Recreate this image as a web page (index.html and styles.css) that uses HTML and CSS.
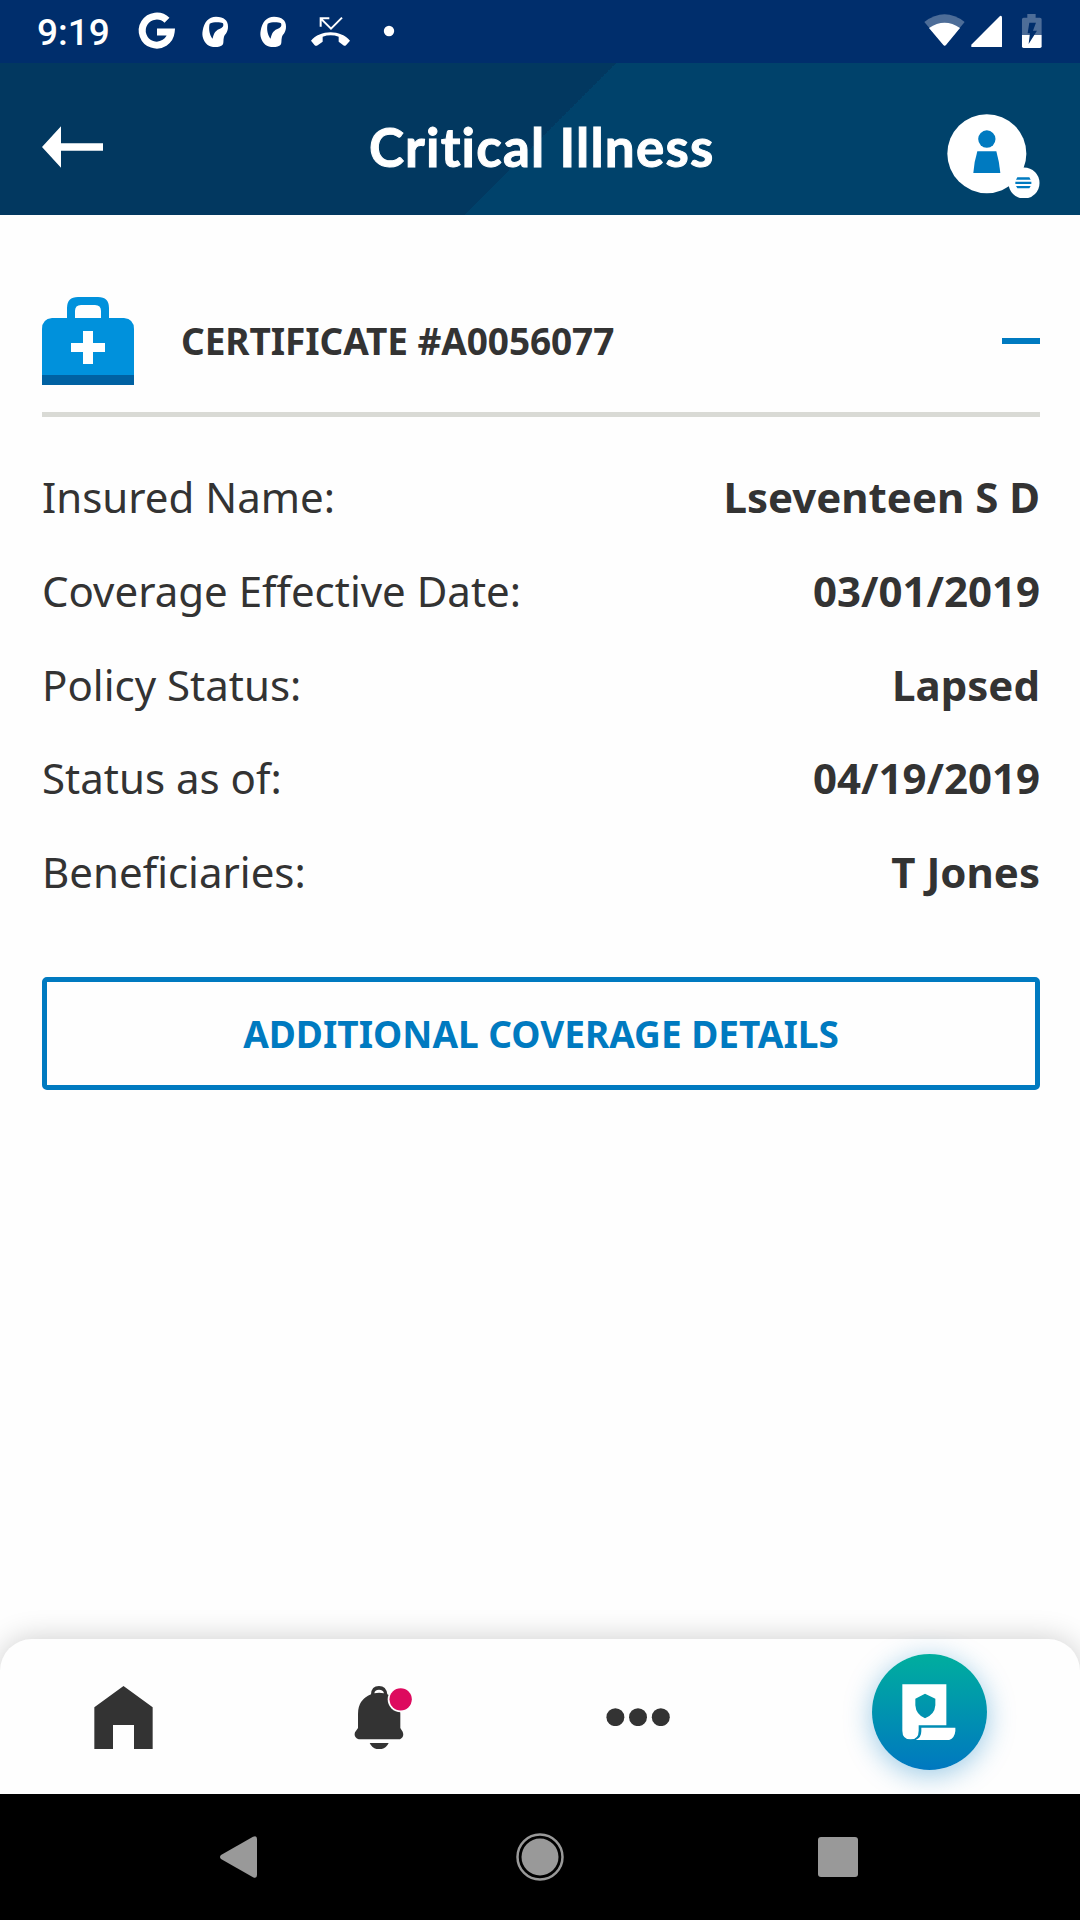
FILE: index.html
```html
<!DOCTYPE html>
<html lang="en">
<head>
<meta charset="utf-8">
<title>Critical Illness</title>
<link rel="stylesheet" href="styles.css">
</head>
<body>
<div class="screen">
  <div class="status-bar">
    <span class="clock">9:19</span>
    <svg class="notifications" viewBox="405 0 795 189" aria-hidden="true">
      <path d="M501 61A43.500 43.500 0 1 0 513.500 96H471" fill="none" stroke="#fff" stroke-width="21"/>
      <g id="head" fill="#fff" fill-rule="evenodd">
        <path d="M648 50C672 50 684 61 684 80C684 97 675 102 672 110C669 120 672 128 668 134C660 143 634 144 622 134C610 122 605 108 608 92C612 66 626 50 648 50ZM629 71C640 66 660 66 669 70C672 79 668 83 658 87C643 93 640 106 638 116C629 107 625 86 629 71Z"/>
      </g>
      <use href="#head" x="174"/>
      <path d="M962 80V55H988M962 55L993 86L1026 53" fill="none" stroke="#fff" stroke-width="6"/>
      <path d="M933 122C960 88 1023 88 1050 122L1038 136Q1034 139 1030 136L1016 125V110Q992 102 968 110V125L953 136Q948 139 944 136Z" fill="#fff"/>
      <circle cx="1167" cy="93" r="15.500" fill="#fff"/>
    </svg>
    <svg class="indicators" viewBox="120 0 370 189" aria-hidden="true">
      <path d="M133 66Q194 20 254 66L194 138Z" fill="#4d6d98"/>
      <path d="M147 84Q194 52 240 84L198 135Q194 139 190 135Z" fill="#fff"/>
      <path d="M360 48Q366 46 366 52V141H274V134Z" fill="#fff"/>
      <path d="M442 42H467V53H480Q485 53 485 58V105H426V58Q426 53 431 53H442Z" fill="#4d6d98"/>
      <path d="M426 105H485V139Q485 144 480 144H431Q426 144 426 139Z" fill="#fff"/>
      <path d="M448 68H468L459 92H471L446 132L450 100H443Z" fill="#002e6c"/>
    </svg>
  </div>

  <header class="app-header">
    <svg class="back" viewBox="126 378 183 125" aria-label="Back"><path d="M126 440.500L183 378V429H309V452H183V503Z" fill="#fff"/></svg>
    <h1 class="title">Critical Illness</h1>
    <svg class="profile" viewBox="203 341 278 254" aria-label="Profile">
      <circle cx="322.500" cy="460" r="118.500" fill="#fff"/>
      <circle cx="434" cy="548" r="46.500" fill="#fff"/>
      <g fill="#007ac0">
        <circle cx="322.500" cy="416" r="26"/>
        <path d="M294 453H351Q360 485 363 518H282Q284 485 294 453Z"/>
        <path d="M414 531H450L454 538H410ZM408 544H456V551H408ZM410 557H454L450 564H414Z"/>
      </g>
    </svg>
  </header>

  <main class="content">
    <section class="certificate">
      <div class="certificate-head">
        <svg class="bag" viewBox="0 0 92 88" aria-hidden="true">
          <path d="M10 21H25V11Q25 0 36 0H56Q67 0 67 11V21H82Q92 22 92 32V78H0V32Q0 22 10 21ZM33 21H59V14Q59 8 53 8H39Q33 8 33 14Z" fill="#0091dc" fill-rule="evenodd"/>
          <path d="M0 78H92V88H0Z" fill="#0061a2"/>
          <path d="M41 34H51V46H63V55H51V67H41V55H29V46H41Z" fill="#fff"/>
        </svg>
        <h2 class="certificate-title">CERTIFICATE #A0056077</h2>
        <span class="collapse"></span>
      </div>
      <dl class="details">
        <div class="row"><dt>Insured Name:</dt><dd>Lseventeen S D</dd></div>
        <div class="row"><dt>Coverage Effective Date:</dt><dd>03/01/2019</dd></div>
        <div class="row"><dt>Policy Status:</dt><dd>Lapsed</dd></div>
        <div class="row"><dt>Status as of:</dt><dd>04/19/2019</dd></div>
        <div class="row"><dt>Beneficiaries:</dt><dd>T Jones</dd></div>
      </dl>
      <button class="more">ADDITIONAL COVERAGE DETAILS</button>
    </section>
  </main>

  <nav class="tab-bar">
    <svg class="tab-home" viewBox="282 228 177 189" aria-label="Home"><path d="M370.500 228L458 292V417H402V345H339V417H283V292Z" fill="#333"/></svg>
    <svg class="tab-alerts" viewBox="1063 227 177 190" aria-label="Notifications">
      <g fill="#333">
        <path d="M1075 353V310Q1075 268 1114 252Q1115 227 1138 227Q1160 227 1163 252Q1202 268 1202 310V353L1209 364Q1215 380 1201 387H1077Q1061 381 1066 366Z"/>
        <path d="M1110 398H1167Q1158 417 1138 417Q1119 417 1110 398Z"/>
      </g>
      <path d="M1124 249Q1125 238 1138 238Q1151 238 1153 249Q1138 245 1124 249Z" fill="#fff"/>
      <circle cx="1203" cy="267" r="39" fill="#fefefe"/>
      <circle cx="1203" cy="267" r="33.500" fill="#dd0a5e"/>
    </svg>
    <svg class="tab-more" viewBox="138 294 192 55" aria-label="More"><g fill="#333"><circle cx="166" cy="321.500" r="27"/><circle cx="234" cy="321.500" r="27"/><circle cx="302.500" cy="321.500" r="27"/></g></svg>
    <span class="tab-policy">
      <svg class="policy" viewBox="1028 221 161 170" aria-label="Policies">
        <path d="M1029 222H1161V345H1078V361Q1078 387 1054 387Q1029 387 1029 361ZM1097 250L1068 265V285Q1070 313 1097 324Q1126 313 1128 285V265Z" fill="#fff" fill-rule="evenodd"/>
        <path d="M1086 352H1188V362Q1186 385 1166 390H1066Q1086 384 1086 362Z" fill="#fff"/>
      </svg>
    </span>
  </nav>

  <div class="system-nav">
    <svg class="nav-back" viewBox="0 0 37 42"><path d="M1 19L33 .8Q37-1 37 3V39Q37 43 33 41.200L1 23Q-1 21 1 19Z" fill="#999"/></svg>
    <svg class="nav-home" viewBox="0 0 48 48"><circle cx="24" cy="24" r="22.500" fill="none" stroke="#999" stroke-width="2.500"/><circle cx="24" cy="24" r="18.500" fill="#999"/></svg>
    <span class="nav-recent"></span>
  </div>
</div>
</body>
</html>
```
FILE: styles.css
```css
* { box-sizing: border-box; }
body { margin: 0; font-family: "Noto Sans", sans-serif; color: #333; background: #fefefe; }
svg { display: block; flex: none; }
.screen { width: 1080px; height: 1920px; display: flex; flex-direction: column; overflow: hidden; }

.status-bar { height: 63px; flex: none; display: flex; align-items: center; background: #002e6c; padding: 0 36.7px 0 37px; }
.clock { width: 98px; font: 500 37px/63px Roboto, sans-serif; color: #fff; padding-top: 2px; white-space: nowrap; }
.notifications { width: 265px; height: 63px; }
.indicators { width: 123.3px; height: 63px; margin-left: auto; }

.app-header { height: 152px; flex: none; display: flex; justify-content: space-between; align-items: flex-start; padding: 0 40px 0 42px; background: linear-gradient(135deg, #023860 50%, #00426b 50%); }
.back { width: 61px; height: 42px; margin-top: 63px; }
.title { margin: 0 0 0 33px; padding-top: 48px; font: 700 53px/72px Lato, sans-serif; letter-spacing: 1.2px; font-variant-ligatures: none; -webkit-text-stroke: 1px #fff; color: #fff; white-space: nowrap; }
.profile { width: 92.7px; height: 84.7px; margin-top: 50.5px; }

.content { flex: 1; padding: 82px 40px 0 42px; }
.certificate { display: flex; flex-direction: column; }
.certificate-head { display: flex; align-items: center; padding-bottom: 27px; border-bottom: 5px solid #d9dad5; }
.bag { width: 92px; height: 88px; }
.certificate-title { margin: 0 0 0 47px; font-size: 37px; line-height: 60px; font-weight: 700; letter-spacing: -.1px; white-space: nowrap; }
.collapse { width: 38px; height: 6px; margin-left: auto; background: #007ac0; }
.details { margin: 33px 0 58px; font-size: 42px; }
.row { display: flex; justify-content: space-between; height: 93.75px; line-height: 93.75px; }
.row dd { margin: 0; font-weight: 700; }
.more { height: 113px; border: 5px solid #007ac0; border-radius: 5px; background: #fefefe; padding: 0; color: #007ac0; font: 700 37px "Noto Sans", sans-serif; }

.tab-bar { height: 155px; flex: none; display: flex; align-items: flex-start; padding-left: 94px; background: #fefefe; border-radius: 32px 32px 0 0; box-shadow: 0 0 30px rgba(0, 0, 0, .2); }
.tab-home { width: 59px; height: 63px; margin-top: 47px; }
.tab-alerts { width: 59px; height: 63.3px; margin: 46.7px 0 0 201.3px; }
.tab-more { width: 64px; height: 18.3px; margin: 69px 0 0 193px; }
.tab-policy { width: 115px; height: 116px; margin: 15px 0 0 201.7px; display: flex; padding: 29.5px 0 0 30.5px; border-radius: 50%; background: linear-gradient(#00ae9e, #0078c0); box-shadow: 0 5px 28px rgba(0, 122, 192, .4); }
.policy { width: 53.7px; height: 56.7px; }

.system-nav { height: 126px; flex: none; display: flex; justify-content: space-between; align-items: center; padding: 0 222px 0 220px; background: #000; }
.nav-back { width: 37px; height: 42px; }
.nav-home { width: 48px; height: 48px; margin-left: 4px; }
.nav-recent { width: 40px; height: 40px; border-radius: 3px; background: #999; }
```
